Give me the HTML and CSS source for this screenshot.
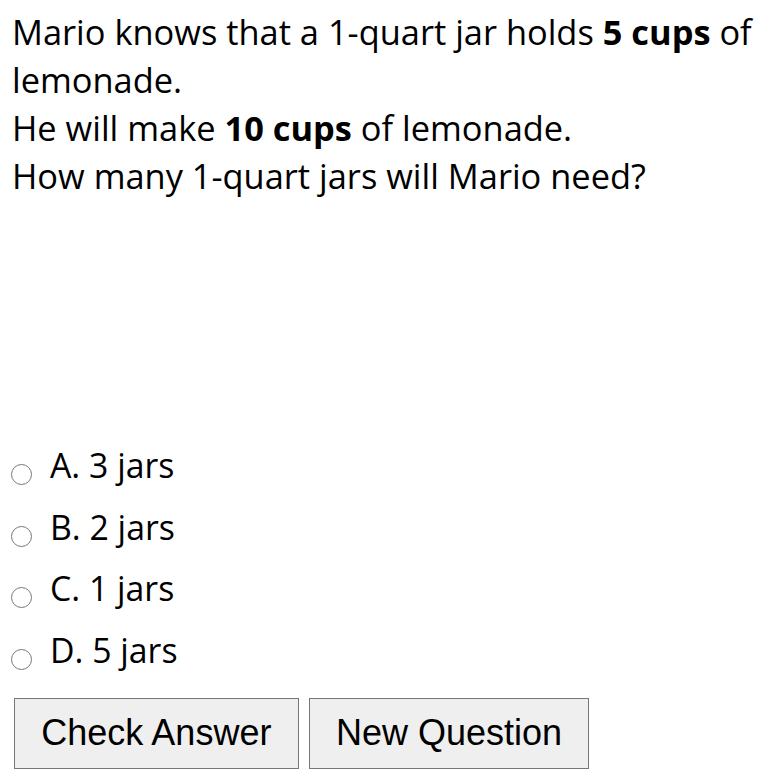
FILE: index.html
```html
<!DOCTYPE html>
<html lang="en">
<head>
<meta charset="utf-8">
<title>Lemonade Question</title>
<link rel="stylesheet" href="styles.css">
</head>
<body>
<main class="quiz">
  <p class="question">Mario knows that a 1-quart jar holds <b>5 cups</b> of lemonade.<br>He will make <b>10 cups</b> of lemonade.<br>How many 1-quart jars will Mario need?</p>
  <div class="spacer"></div>
  <div class="options">
    <label class="option"><input type="radio" name="ans" class="radio"><span class="opt-text">A. 3 jars</span></label>
    <label class="option"><input type="radio" name="ans" class="radio"><span class="opt-text">B. 2 jars</span></label>
    <label class="option"><input type="radio" name="ans" class="radio"><span class="opt-text">C. 1 jars</span></label>
    <label class="option"><input type="radio" name="ans" class="radio"><span class="opt-text">D. 5 jars</span></label>
  </div>
  <div class="actions">
    <button class="btn" type="button">Check Answer</button>
    <button class="btn" type="button">New Question</button>
  </div>
</main>
</body>
</html>
```

FILE: styles.css
```css
html, body {
  margin: 0;
  padding: 0;
  background: #ffffff;
}

.quiz {
  padding: 8px 4px 0 12px;
  font-family: "Open Sans", "Noto Sans", sans-serif;
  color: #000000;
}

.question {
  margin: 0;
  font-size: 34.4px;
  line-height: 48px;
}

.question b {
  font-weight: 700;
}

.spacer {
  height: 241px;
}

.options {
  display: flex;
  flex-direction: column;
}

.option {
  display: flex;
  align-items: flex-start;
  height: 61.5px;
  font-size: 33.8px;
  line-height: 48px;
}

.radio {
  -webkit-appearance: none;
  appearance: none;
  box-sizing: border-box;
  width: 21px;
  height: 21px;
  margin: 23px 18px 0 -1px;
  border: 1.6px solid #777777;
  border-radius: 50%;
  background: #ffffff;
  flex: none;
}

.actions {
  display: flex;
  gap: 10px;
  margin: 11px 0 0 2px;
}

.btn {
  font-family: "Liberation Sans", Arial, sans-serif;
  font-size: 36px;
  line-height: normal;
  color: #000000;
  background: #efefef;
  border: 1px solid #767676;
  border-radius: 0;
  padding: 13.3px 26.3px;
  margin: 0;
}
```
